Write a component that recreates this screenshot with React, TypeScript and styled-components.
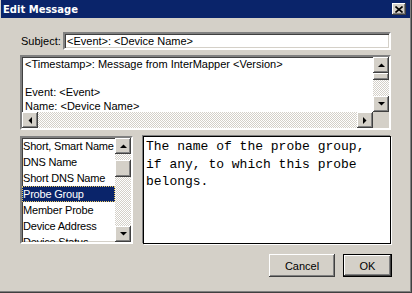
import React from "react";
import styled, { createGlobalStyle, css } from "styled-components";

const GlobalStyle = createGlobalStyle`
  html, body { margin: 0; padding: 0; background: #D4D0C8; }
  body { font-family: "Liberation Sans", Arial, sans-serif; font-size: 11px; }
  * { box-sizing: border-box; }
`;

const FACE = "#D4D0C8";

const raised = css`
  background: ${FACE};
  box-shadow: inset -1px -1px #404040, inset 1px 1px #ffffff,
    inset -2px -2px #808080, inset 2px 2px ${FACE};
`;

const sunken = css`
  border: 2px solid;
  border-color: #808080 #ffffff #ffffff #808080;
  box-shadow: inset 1px 1px #404040, inset -1px -1px ${FACE};
`;

const checker = css`
  background-color: ${FACE};
  background-image: conic-gradient(#ffffff 25%, ${FACE} 0 50%, #ffffff 0 75%, ${FACE} 0);
  background-size: 2px 2px;
`;

const Window = styled.div`
  width: 412px;
  height: 293px;
  background: ${FACE};
  border-right: 1px solid #404040;
  border-bottom: 1px solid #404040;
  box-shadow: inset -1px -1px #808080;
  padding: 0 1px;
  display: flex;
  flex-direction: column;
`;

const TitleBar = styled.div`
  height: 18px;
  background: #0a246a;
  display: flex;
  align-items: center;
  justify-content: space-between;
  padding: 0 4px 0 2px;
`;

const TitleText = styled.span`
  color: #ffffff;
  font-family: "DejaVu Sans", Verdana, sans-serif;
  font-weight: bold;
  font-size: 10px;
`;

const CloseButton = styled.div`
  ${raised};
  width: 14px;
  height: 12px;
  display: flex;
  align-items: center;
  justify-content: center;
`;

const Body = styled.div`
  padding: 14px 19px 0 19px;
  display: flex;
  flex-direction: column;
`;

const SubjectRow = styled.div`
  display: grid;
  grid-template-columns: 43px 1fr;
  align-items: center;
  height: 18px;
`;

const Label = styled.span`
  color: #000;
  padding-left: 1px;
`;

const TextField = styled.div`
  ${sunken};
  background: #fff;
  height: 18px;
  padding: 0 2px;
  line-height: 14px;
  white-space: pre;
  color: #000;
`;

const MessageBox = styled.div`
  ${sunken};
  margin-top: 5px;
  height: 75px;
  display: grid;
  grid-template-columns: 1fr 16px;
  grid-template-rows: 1fr 16px;
  background: #fff;
`;

const MessageText = styled.div`
  padding: 0 3px;
  line-height: 14px;
  white-space: pre;
  overflow: hidden;
  color: #000;
`;

const VScroll = styled.div`
  ${checker};
  display: flex;
  flex-direction: column;
`;

const HScroll = styled.div`
  ${checker};
  display: flex;
  flex-direction: row;
`;

const ScrollButton = styled.div`
  ${raised};
  width: 16px;
  height: 16px;
  flex: none;
  display: flex;
  align-items: center;
  justify-content: center;
`;

const Thumb = styled.div<{ $size: number; $offset: number }>`
  ${raised};
  flex: none;
  width: 16px;
  height: ${(p) => p.$size}px;
  margin-top: ${(p) => p.$offset}px;
`;

const Spacer = styled.div`
  flex: 1;
`;

const Corner = styled.div`
  background: ${FACE};
`;

const LowerRow = styled.div`
  margin-top: 6px;
  height: 108px;
  display: grid;
  grid-template-columns: 113px 1fr;
  column-gap: 10px;
`;

const ListBox = styled.div`
  ${sunken};
  background: #fff;
  display: grid;
  grid-template-columns: 1fr 16px;
  overflow: hidden;
`;

const ListItems = styled.div`
  overflow: hidden;
  display: flex;
  flex-direction: column;
`;

const ListItem = styled.div<{ $selected?: boolean }>`
  height: 16px;
  flex: none;
  line-height: 16px;
  padding-left: 1px;
  letter-spacing: -0.2px;
  white-space: nowrap;
  color: ${(p) => (p.$selected ? "#fff" : "#000")};
  background: ${(p) => (p.$selected ? "#0a246a" : "transparent")};
  outline: ${(p) => (p.$selected ? "1px dotted #e8c860" : "none")};
  outline-offset: -1px;
`;

const Description = styled.div`
  background: #fff;
  border: 1px solid #000;
  box-shadow: -1px -1px 0 #808080, 1px 1px 0 #ffffff;
  font-family: "Liberation Mono", "Courier New", monospace;
  font-size: 13px;
  line-height: 17.5px;
  padding: 1px 2px;
  white-space: pre-line;
  color: #000;
`;

const ButtonRow = styled.div`
  margin-top: 10px;
  display: flex;
  justify-content: flex-end;
  gap: 8px;
  margin-right: -1px;
`;

const Button = styled.div<{ $default?: boolean; $width: number }>`
  ${raised};
  width: ${(p) => p.$width}px;
  height: 23px;
  display: flex;
  align-items: center;
  justify-content: center;
  color: #000;
  ${(p) =>
    p.$default &&
    css`
      box-shadow: inset 0 0 0 1px #000, inset -2px -2px #404040,
        inset 2px 2px #ffffff, inset -3px -3px #808080;
    `}
`;

type Dir = "up" | "down" | "left" | "right";

const Arrow = ({ dir }: { dir: Dir }) => {
  const pts: Record<Dir, string> = {
    up: "0,4 7,4 3.5,0.5",
    down: "0,0 7,0 3.5,3.5",
    left: "4,0 4,7 0.5,3.5",
    right: "0,0 0,7 3.5,3.5",
  };
  const vertical = dir === "up" || dir === "down";
  return (
    <svg width={vertical ? 7 : 4} height={vertical ? 4 : 7} viewBox={vertical ? "0 0 7 4" : "0 0 4 7"}>
      <polygon points={pts[dir]} fill="#000" />
    </svg>
  );
};

const CloseIcon = () => (
  <svg width="8" height="7" viewBox="0 0 8 7">
    <path d="M0.5 0.5 L7.5 6.5 M7.5 0.5 L0.5 6.5" stroke="#000" strokeWidth="1.6" fill="none" />
  </svg>
);

const items = [
  "Short, Smart Name",
  "DNS Name",
  "Short DNS Name",
  "Probe Group",
  "Member Probe",
  "Device Address",
  "Device Status",
];

export default function App() {
  return (
    <>
      <GlobalStyle />
      <Window>
        <TitleBar>
          <TitleText>Edit Message</TitleText>
          <CloseButton>
            <CloseIcon />
          </CloseButton>
        </TitleBar>
        <Body>
          <SubjectRow>
            <Label>Subject:</Label>
            <TextField>{"<Event>: <Device Name>"}</TextField>
          </SubjectRow>
          <MessageBox>
            <MessageText>
              {"<Timestamp>: Message from InterMapper <Version>\n\nEvent: <Event>\nName: <Device Name>"}
            </MessageText>
            <VScroll>
              <ScrollButton>
                <Arrow dir="up" />
              </ScrollButton>
              <Thumb $size={7} $offset={0} />
              <Spacer />
              <ScrollButton>
                <Arrow dir="down" />
              </ScrollButton>
            </VScroll>
            <HScroll>
              <ScrollButton>
                <Arrow dir="left" />
              </ScrollButton>
              <Spacer />
              <ScrollButton>
                <Arrow dir="right" />
              </ScrollButton>
            </HScroll>
            <Corner />
          </MessageBox>
          <LowerRow>
            <ListBox>
              <ListItems>
                {items.map((it) => (
                  <ListItem key={it} $selected={it === "Probe Group"}>
                    {it}
                  </ListItem>
                ))}
              </ListItems>
              <VScroll>
                <ScrollButton>
                  <Arrow dir="up" />
                </ScrollButton>
                <Thumb $size={17} $offset={6} />
                <Spacer />
                <ScrollButton>
                  <Arrow dir="down" />
                </ScrollButton>
              </VScroll>
            </ListBox>
            <Description>
              {"The name of the probe group,\nif any, to which this probe\nbelongs."}
            </Description>
          </LowerRow>
          <ButtonRow>
            <Button $width={66}>Cancel</Button>
            <Button $width={49} $default>
              OK
            </Button>
          </ButtonRow>
        </Body>
      </Window>
    </>
  );
}
